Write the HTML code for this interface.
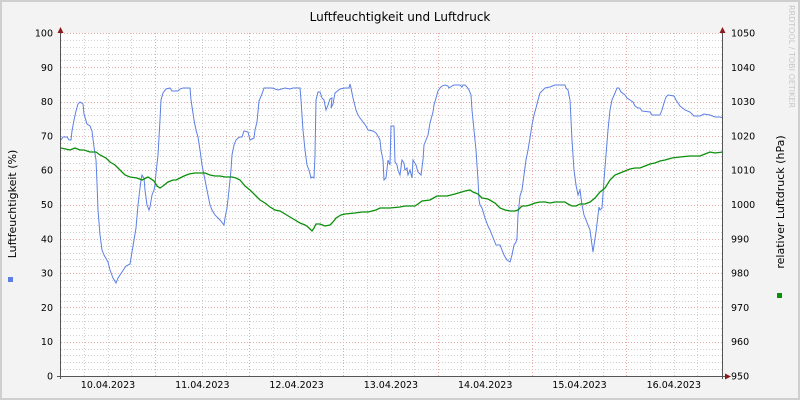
<!DOCTYPE html>
<html><head><meta charset="utf-8"><style>
html,body{margin:0;padding:0;background:#f3f3f3}
svg{display:block}
text{font-family:"DejaVu Sans","Liberation Sans",sans-serif}
</style></head><body>
<svg width="800" height="400" xmlns="http://www.w3.org/2000/svg">
<rect x="0" y="0" width="800" height="400" fill="#cfcfcf"/>
<rect x="2" y="2" width="796" height="396" fill="#f3f3f3"/>
<rect x="61" y="33" width="662" height="343" fill="#ffffff"/>
<g shape-rendering="crispEdges" fill="none" stroke-dasharray="1,2">
<path stroke="#d0d0d0" d="M61 369.5H723M61 362.5H723M61 355.5H723M61 349.5H723M61 335.5H723M61 328.5H723M61 321.5H723M61 314.5H723M61 301.5H723M61 294.5H723M61 287.5H723M61 280.5H723M61 266.5H723M61 259.5H723M61 253.5H723M61 246.5H723M61 232.5H723M61 225.5H723M61 218.5H723M61 211.5H723M61 198.5H723M61 191.5H723M61 184.5H723M61 177.5H723M61 163.5H723M61 156.5H723M61 150.5H723M61 143.5H723M61 129.5H723M61 122.5H723M61 115.5H723M61 108.5H723M61 95.5H723M61 88.5H723M61 81.5H723M61 74.5H723M61 60.5H723M61 54.5H723M61 47.5H723M61 40.5H723
M84.5 33V376M108.5 33V376M131.5 33V376M178.5 33V376M202.5 33V376M226.5 33V376M273.5 33V376M296.5 33V376M320.5 33V376M367.5 33V376M391.5 33V376M414.5 33V376M461.5 33V376M485.5 33V376M509.5 33V376M556.5 33V376M579.5 33V376M603.5 33V376M650.5 33V376M674.5 33V376M697.5 33V376"/>
<path stroke="#e8a8a8" d="M61 342.5H723M61 307.5H723M61 273.5H723M61 239.5H723M61 205.5H723M61 170.5H723M61 136.5H723M61 102.5H723M61 67.5H723M61 33.5H723M155.5 33V376M249.5 33V376M343.5 33V376M438.5 33V376M532.5 33V376M626.5 33V376"/>
</g>
<text x="400" y="21" font-size="12" text-anchor="middle" fill="#000">Luftfeuchtigkeit und Luftdruck</text>
<text transform="translate(16,204) rotate(-90)" font-size="11" text-anchor="middle" fill="#000">Luftfeuchtigkeit (%)</text>
<rect x="8" y="277" width="5" height="5" fill="#5b7fe5"/>
<text transform="translate(784,202) rotate(-90)" font-size="11" text-anchor="middle" fill="#000">relativer Luftdruck (hPa)</text>
<rect x="777" y="293" width="5" height="5" fill="#0a8f0a"/>
<text transform="translate(789,5) rotate(90)" font-size="8" fill="#c8c8c8">RRDTOOL / TOBI OETIKER</text>
<g font-size="9.5" fill="#000" text-anchor="end">
<text x="53" y="379.5">0</text><text x="53" y="345.2">10</text><text x="53" y="310.9">20</text><text x="53" y="276.6">30</text><text x="53" y="242.3">40</text><text x="53" y="208">50</text><text x="53" y="173.7">60</text><text x="53" y="139.4">70</text><text x="53" y="105.1">80</text><text x="53" y="70.8">90</text><text x="53" y="36.5">100</text>
</g>
<g font-size="9.5" fill="#000">
<text x="731" y="379.5">950</text><text x="731" y="345.2">960</text><text x="731" y="310.9">970</text><text x="731" y="276.6">980</text><text x="731" y="242.3">990</text><text x="731" y="208">1000</text><text x="731" y="173.7">1010</text><text x="731" y="139.4">1020</text><text x="731" y="105.1">1030</text><text x="731" y="70.8">1040</text><text x="731" y="36.5">1050</text>
</g>
<g font-size="9.5" fill="#000" text-anchor="middle">
<text x="108" y="388">10.04.2023</text><text x="202.3" y="388">11.04.2023</text><text x="296.6" y="388">12.04.2023</text><text x="390.9" y="388">13.04.2023</text><text x="485.2" y="388">14.04.2023</text><text x="579.5" y="388">15.04.2023</text><text x="673.8" y="388">16.04.2023</text>
</g>
<polyline fill="none" stroke="#5b7fe5" stroke-width="1" points="61,140 63,137 67,137 69,140 71,140 72,131 74,120 76,111 78,104 80,102 83,104 84,114 87,124 90,126 92,131 94,147 96,160 97,183 98,210 100,235 102,250 104,255 108,262 110,270 113,278 116,283 118,278 122,272 126,266 130,264 132,252 134,240 136,228 138,205 140,188 141,180 142,175 144,178 145,190 147,205 149,210 150,207 152,195 154,190 155,185 156,173 158,155 160,120 161,100 163,93 166,89 170,88 172,91 178,91 180,89 183,88 190,88 191,100 194,120 196,130 198,137 200,150 202,165 204,175 206,185 208,195 210,205 212,210 215,215 220,220 224,225 225,218 227,208 229,190 231,170 232,155 234,145 236,140 238,138 240,137 242,137 244,131 248,132 250,140 254,138 255,130 257,122 259,101 262,94 264,88 272,88 278,90 285,88 290,89 293,88 300,88 301,100 303,130 305,150 307,165 309,170 311,178 312,177 314,178 315,155 316,100 318,92 320,92 322,98 324,100 326,110 328,105 330,99 332,98 331,108 333,104 335,93 340,89 345,88 349,88 350,84 351,88 353,98 356,110 358,115 360,118 363,122 366,126 368,130 373,131 376,133 379,138 380,140 381,150 383,160 384,180 386,178 388,160 390,165 391,126 394,126 395,162 397,165 398,170 400,175 402,160 404,163 405,170 407,168 408,175 410,170 412,178 413,160 416,165 418,172 421,175 423,160 424,145 426,140 428,135 430,123 433,112 434,105 436,98 438,91 440,88 442,86 445,85 448,86 449,88 452,86 454,85 460,85 462,87 463,85 465,85 467,87 469,90 471,95 472,110 474,130 476,150 478,180 479,200 480,205 482,208 485,218 488,226 490,230 492,235 494,240 496,245 500,245 502,250 504,255 507,260 510,262 512,255 514,245 516,242 517,238 518,215 520,196 522,190 524,175 526,160 528,150 530,138 532,125 534,115 536,108 538,100 540,93 541,92 543,90 545,88 550,87 555,85 565,85 566,88 568,90 570,100 572,140 574,170 576,185 578,195 580,190 582,205 584,215 586,220 588,225 590,230 592,245 593,252 596,232 599,207 600,210 602,208 604,180 606,155 608,130 610,110 612,100 615,93 617,88 619,88 621,92 625,95 627,98 630,100 633,102 635,106 638,108 640,108 642,111 650,112 652,115 660,115 662,110 664,103 666,97 668,95 674,96 676,100 678,103 680,106 685,110 690,112 694,116 700,116 704,114 710,115 715,117 720,117 723,118"/>
<polyline fill="none" stroke="#0a8f0a" stroke-width="1.3" points="61,148 70,150 75,148 80,150 84,150 90,152 96,152 100,155 106,158 110,162 115,165 120,170 125,175 130,177 137,178 142,180 148,177 154,181 157,186 160,188 163,186 168,182 173,180 176,180 180,178 184,176 189,174 195,173 200,173 205,173 210,175 215,176 220,176 225,177 232,177 236,178 240,180 245,186 250,190 255,195 260,200 265,203 270,207 275,210 280,211 285,214 290,217 295,220 300,223 305,225 308,227 312,231 314,228 316,224 320,224 325,226 330,225 333,222 336,218 341,215 345,214 355,213 362,212 368,212 372,211 376,210 380,208 385,208 390,208 400,207 405,206 410,206 415,206 418,204 422,201 430,200 437,196 447,196 455,194 465,191 470,190 473,192 478,194 482,198 488,199 495,203 500,208 505,210 510,211 515,211 518,210 522,206 526,206 530,205 535,203 540,202 545,202 550,203 555,202 560,202 565,202 568,204 572,206 576,206 580,204 585,204 590,202 595,198 600,192 605,188 610,180 615,175 620,173 625,171 630,169 635,168 640,168 645,166 650,164 655,163 660,161 665,160 672,158 680,157 690,156 700,156 705,154 710,152 715,153 723,152"/>
<g shape-rendering="crispEdges" stroke="#555" stroke-width="1">
<line x1="60.5" y1="30" x2="60.5" y2="379"/>
<line x1="722.5" y1="30" x2="722.5" y2="379"/>
<line x1="57" y1="376.5" x2="726" y2="376.5"/>
</g>
<polygon points="57.5,33 60.5,27 63.5,33" fill="#8b1a1a"/>
<polygon points="719.5,33 722.5,27 725.5,33" fill="#8b1a1a"/>
<polygon points="725,373.5 731,376.5 725,379.5" fill="#8b1a1a"/>
</svg>
</body></html>
